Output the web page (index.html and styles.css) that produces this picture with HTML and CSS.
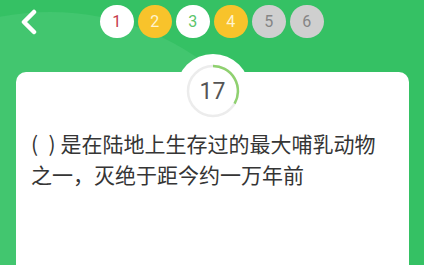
FILE: index.html
```html
<!DOCTYPE html>
<html lang="zh">
<head>
  <meta charset="UTF-8" />
  <title>答题</title>
  <link rel="stylesheet" href="styles.css">
</head>
<body>
<div class="backdrop"><div class="glow"></div></div>
<div class="page">
  <div class="top-bar">
    <a class="back-button">
      <svg width="18" height="26" viewBox="0 0 18 26">
        <polyline points="14,3 4,13 14,23" fill="none" stroke="#fff" stroke-width="4.5" stroke-linecap="round" stroke-linejoin="round"/>
      </svg>
    </a>
    <div class="steps">
      <span class="step wrong">1</span>
      <span class="step skip">2</span>
      <span class="step right">3</span>
      <span class="step skip">4</span>
      <span class="step todo">5</span>
      <span class="step todo">6</span>
    </div>
  </div>

  <div class="card">
    <div class="timer">
      <svg width="54" height="54" viewBox="0 0 54 54">
        <circle cx="27" cy="27" r="25" fill="none" stroke="#ececec" stroke-width="2.5"/>
        <path d="M27 2 A25 25 0 0 1 48.6 39.5" fill="none" stroke="#8fd16f" stroke-width="2.5"/>
      </svg>
      <span class="timer-num">17</span>
    </div>
    <div class="question">(&ensp;)&nbsp;是在陆地上生存过的最大哺乳动物之一，灭绝于距今约一万年前</div>
  </div>
</div>
</body>
</html>
```

FILE: styles.css
```css
html, body {
  overflow: hidden;
}
body {
  margin: 0;
  width: 424px;
  height: 265px;
  background: #35c164;
  position: relative;
  font-family: "Noto Sans CJK SC", sans-serif;
}
.backdrop {
  position: absolute;
  inset: 0;
  overflow: hidden;
}
.glow {
  position: absolute;
  left: -210px;
  top: 12px;
  width: 520px;
  height: 520px;
  border-radius: 50%;
  background: #42c66f;
}
.page {
  position: relative;
}
.top-bar {
  display: flex;
  align-items: center;
  padding: 5px 0 0 20px;
  height: 33px;
}
.back-button {
  display: flex;
  width: 18px;
  height: 26px;
}
.steps {
  display: flex;
  gap: 4.5px;
  margin-left: 62px;
}
.step {
  width: 33.5px;
  height: 33.5px;
  border-radius: 50%;
  display: flex;
  align-items: center;
  justify-content: center;
  font-family: Roboto, sans-serif;
  font-size: 16px;
}
.step.wrong {
  background: #fff;
  color: #c63a4c;
}
.step.right {
  background: #fff;
  color: #5cc56b;
}
.step.skip {
  background: #f8c32b;
  color: #fff4cf;
}
.step.todo {
  background: #cfcfcf;
  color: #858585;
}
.card {
  display: flow-root;
  margin: 34px 15px 0 16px;
  height: 193px;
  background: #fff;
  border-radius: 10px 10px 0 0;
}
.timer {
  position: relative;
  width: 74px;
  height: 74px;
  margin: -18px auto 0;
  border-radius: 50%;
  background: #fff;
  display: flex;
  align-items: center;
  justify-content: center;
}
.timer svg {
  position: absolute;
  left: 10px;
  top: 10px;
}
.timer-num {
  font-family: Roboto, sans-serif;
  font-size: 23px;
  color: #555;
}
.question {
  padding: 0 22px 0 15px;
  font-size: 21px;
  line-height: 31px;
  color: #353535;
}
```
